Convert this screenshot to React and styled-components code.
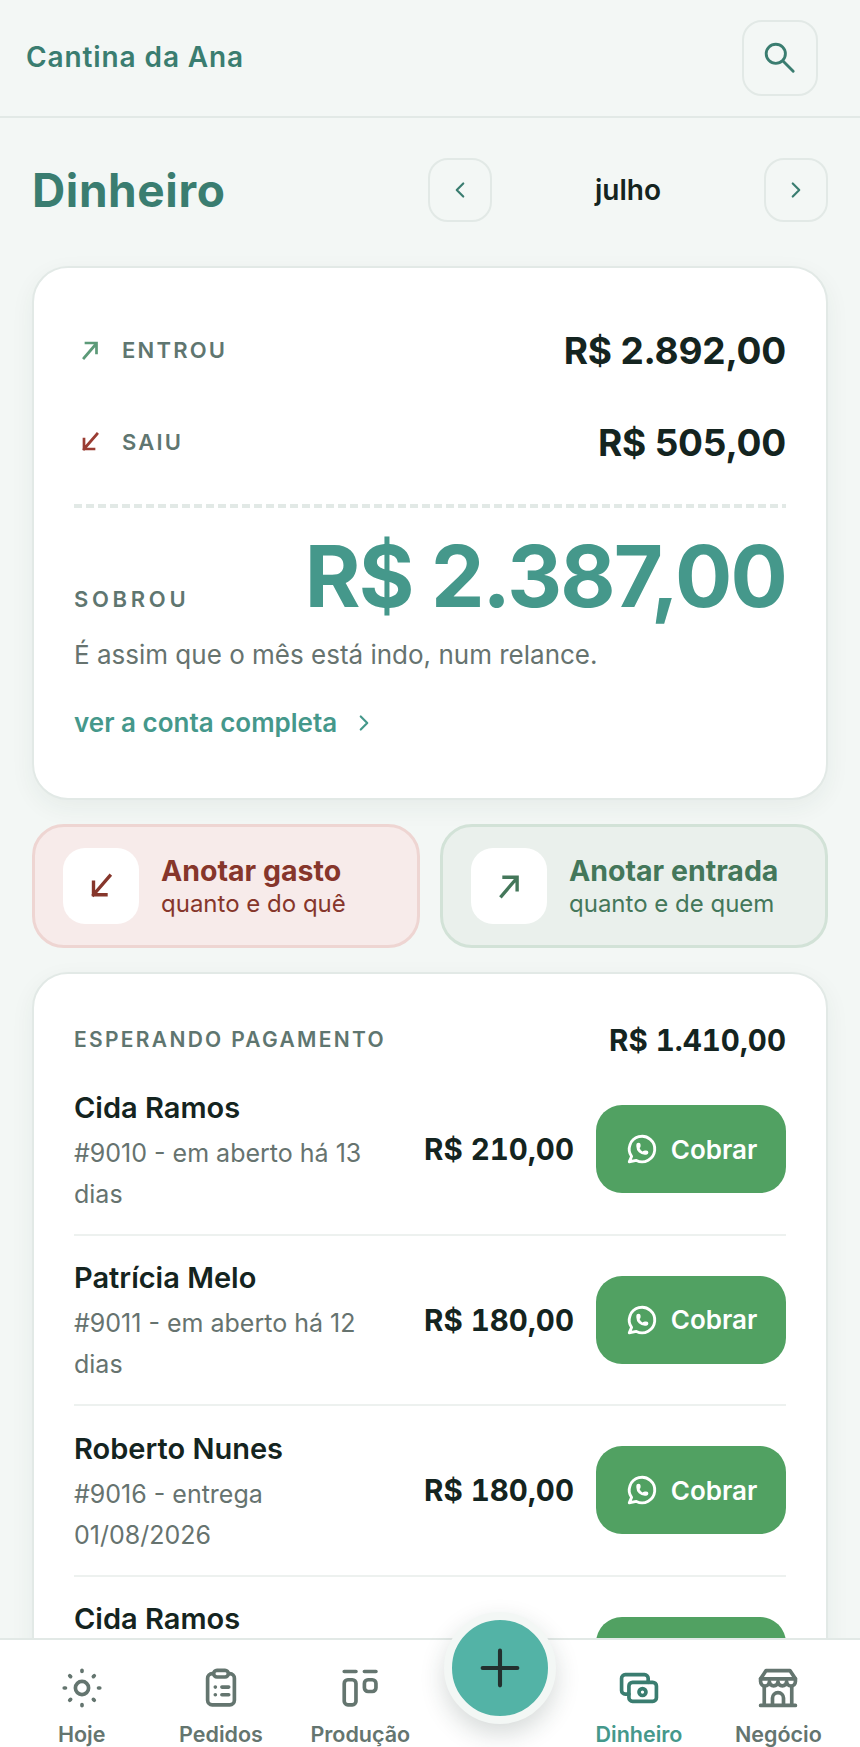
import React from 'react';
import styled, { createGlobalStyle } from 'styled-components';
import { TbBrandWhatsapp } from 'react-icons/tb';

const GlobalStyle = createGlobalStyle`
  html, body { margin: 0; padding: 0; height: 100%; }
  body { background: #f3f7f5; font-family: Inter, "Liberation Sans", sans-serif; color: #142420; overflow: hidden; }
  * { box-sizing: border-box; }
`;

const heading = `"Inter", "Liberation Sans", sans-serif`;

const Screen = styled.div`
  position: relative;
  width: 860px;
  height: 1747px;
  overflow: hidden;
  display: flex;
  flex-direction: column;
`;

const TopBar = styled.header`
  height: 118px;
  flex: none;
  display: flex;
  align-items: center;
  justify-content: space-between;
  padding: 0 42px 0 26px;
  border-bottom: 2px solid #e2e9e6;
`;

const Brand = styled.div`
  font: 600 28px ${heading};
  color: #3a7d70;
  letter-spacing: 0.9px;
  margin-top: -2px;
`;

const IconButton = styled.button`
  display: flex;
  align-items: center;
  justify-content: center;
  width: ${p => p.$size}px;
  height: ${p => p.$size}px;
  padding: 0;
  background: transparent;
  border: 2px solid #e2e9e6;
  border-radius: 20px;
  color: #3a7d70;
`;

const Main = styled.main`
  padding: 40px 32px 0;
  display: flex;
  flex-direction: column;
`;

const TitleRow = styled.div`
  display: flex;
  align-items: center;
  justify-content: space-between;
  height: 64px;
`;

const Title = styled.h1`
  margin: 0;
  font: 700 46px ${heading};
  letter-spacing: 0.6px;
  color: #3a7d70;
`;

const MonthNav = styled.div`
  display: flex;
  align-items: center;
  width: 400px;
  justify-content: space-between;
`;

const Month = styled.span`
  font-size: 28px;
  font-weight: 600;
  color: #142420;
`;

const Card = styled.section`
  background: #fff;
  border: 2px solid #e2e9e6;
  border-radius: 36px;
  padding: ${p => p.$pad};
  box-shadow: 0 8px 24px rgba(40, 60, 55, 0.06);
`;

const SummaryCard = styled(Card)`
  margin-top: 44px;
  height: 534px;
`;

const Row = styled.div`
  display: flex;
  align-items: center;
  justify-content: space-between;
  height: 92px;
`;

const Label = styled.span`
  display: flex;
  align-items: center;
  gap: 20px;
  font: 600 22px ${heading};
  letter-spacing: ${p => (p.$wide ? '3.7px' : '2.2px')};
  color: #5f7670;
  svg { margin-left: 4px; }
`;

const Amount = styled.span`
  font: 700 37px ${heading};
  color: #142420;
  letter-spacing: -0.2px;
`;

const Dashed = styled.div`
  margin-top: 16px;
  height: 4px;
  background: repeating-linear-gradient(90deg, #e2e9e6 0 8px, transparent 8px 12px);
`;

const TotalRow = styled.div`
  display: flex;
  align-items: baseline;
  justify-content: space-between;
  margin-top: 23px;
  line-height: 92px;
`;

const Total = styled.span`
  font: 700 85px/92px ${heading};
  color: #45988b;
  letter-spacing: -1.8px;
`;

const Note = styled.p`
  margin: 14px 0 0;
  font-size: 26px;
  line-height: 36px;
  color: #66736f;
`;

const MoreLink = styled.a`
  display: flex;
  align-items: center;
  gap: 14px;
  margin-top: 34px;
  font-size: 26px;
  font-weight: 600;
  color: #45988b;
`;

const Actions = styled.div`
  display: grid;
  grid-template-columns: 1fr 1fr;
  gap: 20px;
  margin-top: 24px;
`;

const Action = styled.button`
  display: flex;
  align-items: center;
  gap: 22px;
  height: 124px;
  padding: 0 28px;
  text-align: left;
  border-radius: 32px;
  font-family: inherit;
  background: ${p => (p.$tone === 'out' ? '#f7ebea' : '#eaf0ec')};
  border: 3px solid ${p => (p.$tone === 'out' ? '#eed5d2' : '#d2e2d7')};
  color: ${p => (p.$tone === 'out' ? '#86362b' : '#44775a')};
`;

const ActionIcon = styled.span`
  flex: none;
  width: 76px;
  height: 76px;
  display: flex;
  align-items: center;
  justify-content: center;
  background: #fff;
  border-radius: 22px;
`;

const ActionText = styled.span`
  display: flex;
  flex-direction: column;
`;

const ActionTitle = styled.span`
  font-size: 28.500px;
  font-weight: 700;
  line-height: 35px;
`;

const ActionSub = styled.span`
  font-size: 24px;
  line-height: 32px;
`;

const ListCard = styled(Card)`
  margin-top: 24px;
`;

const ListHead = styled.div`
  display: flex;
  align-items: center;
  justify-content: space-between;
  height: 45px;
  padding-bottom: 6px;
`;

const ListLabel = styled.span`
  font: 600 21px ${heading};
  letter-spacing: 2.3px;
  color: #5f7670;
`;

const ListTotal = styled.span`
  font: 700 29.500px ${heading};
  font-variant-numeric: tabular-nums;
  color: #142420;
`;

const Debt = styled.div`
  display: flex;
  align-items: center;
  height: 170.500px;
  gap: 22px;
  border-bottom: 2px solid #edf1ef;
`;

const DebtInfo = styled.div`
  flex: 1;
  min-width: 0;
  padding-top: 5px;
`;

const DebtName = styled.div`
  font-size: 29px;
  font-weight: 600;
  line-height: 38px;
`;

const DebtSub = styled.div`
  margin-top: 6px;
  font-size: 25px;
  line-height: 41px;
  color: #66736f;
  max-width: 300px;
`;

const DebtAmount = styled.span`
  font: 700 29.500px ${heading};
  font-variant-numeric: tabular-nums;
  white-space: nowrap;
`;

const ChargeButton = styled.button`
  flex: none;
  display: flex;
  align-items: center;
  justify-content: center;
  gap: 12px;
  width: 190px;
  height: 88px;
  border: 0;
  border-radius: 26px;
  background: #51a162;
  color: #fff;
  font: 600 26px Inter, sans-serif;
`;

const BottomNav = styled.nav`
  position: absolute;
  left: 0;
  right: 0;
  bottom: 0;
  height: 109px;
  padding: 0 12px;
  display: grid;
  grid-template-columns: repeat(6, 1fr);
  background: #fff;
  border-top: 2px solid #e2e9e6;
`;

const NavItem = styled.div`
  display: flex;
  flex-direction: column;
  align-items: center;
  padding-top: 26px;
  gap: 11px;
  font-size: 21.500px;
  font-weight: 600;
  line-height: 26px;
  color: ${p => (p.$active ? '#45988b' : '#64756f')};
  svg { color: ${p => (p.$active ? '#3a7d70' : '#64756f')}; }
`;

const Fab = styled.button`
  position: absolute;
  left: 444px;
  top: 1612px;
  width: 112px;
  height: 112px;
  display: flex;
  align-items: center;
  justify-content: center;
  border-radius: 50%;
  background: #53b3a6;
  border: 8px solid #f3f7f5;
  box-shadow: 0 10px 24px rgba(30, 50, 45, 0.18);
  color: #23302e;
`;

const Stroke = ({ size = 24, width = 2, children }) => (
  <svg width={size} height={size} viewBox="0 0 24 24" fill="none" stroke="currentColor" strokeWidth={width} strokeLinecap="round" strokeLinejoin="round">
    {children}
  </svg>
);

const ArrowUp = ({ color, size = 24 }) => (
  <svg width={size} height={size} viewBox="0 0 24 24" fill="none" stroke={color} strokeWidth="2.700" strokeLinecap="square">
    <path d="M6 20 18 6M8 5h10.500v10" />
  </svg>
);

const ArrowDown = ({ color, size = 24 }) => (
  <svg width={size} height={size} viewBox="0 0 24 24" fill="none" stroke={color} strokeWidth="2.700" strokeLinecap="square">
    <path d="M19 4 6 19M6 9v10h10" />
  </svg>
);

const Sun = () => (
  <Stroke size={44}>
    <circle cx="12" cy="12" r="3.600" />
    <path d="M12 2.300v.7M12 21v.7M2.300 12h.7M21 12h.7M5.300 5.300l.5.5M18.200 18.200l.5.5M5.300 18.700l.5-.5M18.200 5.800l.5-.5" />
  </Stroke>
);

const Clipboard = () => (
  <Stroke size={44}>
    <rect x="4.700" y="4.200" width="14.600" height="17" rx="2.500" />
    <rect x="8" y="2.400" width="8" height="3.600" rx="1.800" fill="#fff" />
    <path d="M8.900 11.500h.01M12.500 11.500h3.700M8.900 15.700h.01M12.500 15.700h3.700" />
  </Stroke>
);

const Production = () => (
  <Stroke size={44}>
    <path d="M3.400 3h6.400M14.400 3h6.300" />
    <rect x="3.400" y="7.500" width="6.400" height="13.700" rx="2" />
    <rect x="14.400" y="7.500" width="6.300" height="6.400" rx="2" />
  </Stroke>
);

const Money = () => (
  <Stroke size={44}>
    <path d="M17 8.900V6.700a2 2 0 0 0-2-2H4.500a2 2 0 0 0-2 2v6.600a2 2 0 0 0 2 2h2" />
    <rect x="6.500" y="8.900" width="15" height="10.400" rx="2" />
    <circle cx="13.900" cy="14.200" r="1.900" />
  </Stroke>
);

const Store = () => (
  <Stroke size={44}>
    <path d="M2.500 21.500h19M4.500 21.500V11.500M19.500 21.500V11.500M9 21.500v-4a3 3 0 0 1 6 0v4" />
    <path d="M5.500 2.500h13L21.500 7v1.500a2.400 2.400 0 0 1-4.800 0 2.350 2.350 0 0 1-4.700 0 2.350 2.350 0 0 1-4.700 0 2.400 2.400 0 0 1-4.800 0V7z" />
    <path d="M2.500 7h19" />
  </Stroke>
);

const debts = [
  { name: 'Cida Ramos', sub: '#9010 - em aberto há 13 dias', value: 'R$ 210,00' },
  { name: 'Patrícia Melo', sub: '#9011 - em aberto há 12 dias', value: 'R$ 180,00' },
  { name: 'Roberto Nunes', sub: '#9016 - entrega 01/08/2026', value: 'R$ 180,00' },
  { name: 'Cida Ramos', sub: '#9010 - em aberto há 13 dias', value: 'R$ 210,00' },
];

export default function App() {
  return (
    <Screen>
      <GlobalStyle />
      <TopBar>
        <Brand>Cantina da Ana</Brand>
        <IconButton $size={76}>
          <Stroke size={36} width={1.900}>
            <circle cx="9.200" cy="9.200" r="6.400" />
            <path d="m14 14 6.800 6.800" />
          </Stroke>
        </IconButton>
      </TopBar>
      <Main>
        <TitleRow>
          <Title>Dinheiro</Title>
          <MonthNav>
            <IconButton $size={64}>
              <Stroke size={26}><path d="m15 6-6 6 6 6" /></Stroke>
            </IconButton>
            <Month>julho</Month>
            <IconButton $size={64}>
              <Stroke size={26}><path d="m9 6 6 6-6 6" /></Stroke>
            </IconButton>
          </MonthNav>
        </TitleRow>
        <SummaryCard $pad="36px 40px">
          <Row>
            <Label><ArrowUp color="#5c9a78" size={24} />ENTROU</Label>
            <Amount>R$ 2.892,00</Amount>
          </Row>
          <Row>
            <Label><ArrowDown color="#9a3d33" size={24} />SAIU</Label>
            <Amount>R$ 505,00</Amount>
          </Row>
          <Dashed />
          <TotalRow>
            <Label $wide>SOBROU</Label>
            <Total>R$ 2.387,00</Total>
          </TotalRow>
          <Note>É assim que o mês está indo, num relance.</Note>
          <MoreLink>
            ver a conta completa
            <Stroke size={26}><path d="m9 6 6 6-6 6" /></Stroke>
          </MoreLink>
        </SummaryCard>
        <Actions>
          <Action $tone="out">
            <ActionIcon><ArrowDown color="#86362b" size={30} /></ActionIcon>
            <ActionText>
              <ActionTitle>Anotar gasto</ActionTitle>
              <ActionSub>quanto e do quê</ActionSub>
            </ActionText>
          </Action>
          <Action $tone="in">
            <ActionIcon><ArrowUp color="#44775a" size={30} /></ActionIcon>
            <ActionText>
              <ActionTitle>Anotar entrada</ActionTitle>
              <ActionSub>quanto e de quem</ActionSub>
            </ActionText>
          </Action>
        </Actions>
        <ListCard $pad="46px 40px 0">
          <ListHead>
            <ListLabel>ESPERANDO PAGAMENTO</ListLabel>
            <ListTotal>R$ 1.410,00</ListTotal>
          </ListHead>
          {debts.map((d, i) => (
            <Debt key={i}>
              <DebtInfo>
                <DebtName>{d.name}</DebtName>
                <DebtSub>{d.sub}</DebtSub>
              </DebtInfo>
              <DebtAmount>{d.value}</DebtAmount>
              <ChargeButton><TbBrandWhatsapp size={34} />Cobrar</ChargeButton>
            </Debt>
          ))}
        </ListCard>
      </Main>
      <BottomNav>
        <NavItem><Sun />Hoje</NavItem>
        <NavItem><Clipboard />Pedidos</NavItem>
        <NavItem><Production />Produção</NavItem>
        <div />
        <NavItem $active><Money />Dinheiro</NavItem>
        <NavItem><Store />Negócio</NavItem>
      </BottomNav>
      <Fab>
        <Stroke size={52} width={1.900}><path d="M12 4v16M4 12h16" /></Stroke>
      </Fab>
    </Screen>
  );
}
